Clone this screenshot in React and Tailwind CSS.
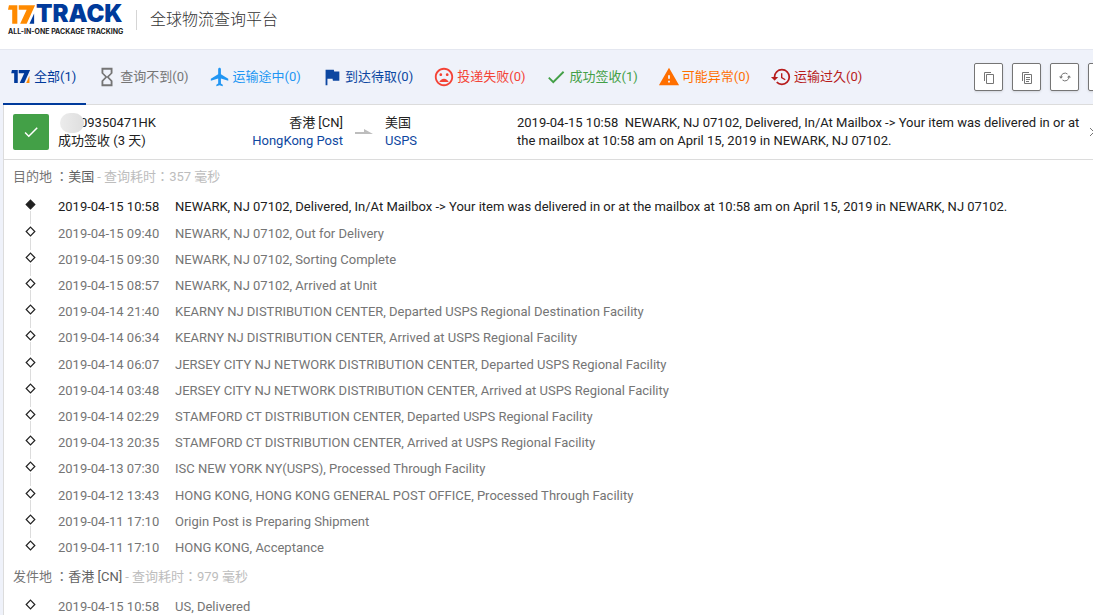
import {
  MdCheck,
  MdFlag,
  MdFlight,
  MdHistory,
  MdHourglassEmpty,
  MdMoodBad,
  MdWarning,
} from "react-icons/md";

const LogoMark = ({ className, color, accent }) => (
  <svg viewBox="0 0 30 20" className={className} aria-hidden="true">
    <path d="M1 0h9v20H4.500V5H0z" fill={color} />
    <path d="M11.500 0H29L20 20h-7l7-15h-8.500z" fill={color} />
    <path d="M28 9v11h-5z" fill={accent} />
  </svg>
);

const CopyIcon = ({ lines }) => (
  <svg viewBox="0 0 12 13" className="h-[13px] w-3" fill="none" stroke="currentColor" aria-hidden="true">
    <path d="M1.500 10V1.500H8" />
    <path d="M3.500 3.500h7v9h-7z" />
    {lines && <path d="M5 6.500h4M5 8.500h4M5 10.500h3" />}
  </svg>
);

const RefreshIcon = () => (
  <svg viewBox="0 0 12 10" className="h-2.5 w-3" fill="none" stroke="currentColor" aria-hidden="true">
    <path d="M2 5.500a4 4 0 0 1 6.500-3.500M10 4.500a4 4 0 0 1-6.500 3.500" />
    <path d="M0 4.500h4L2 6.800zM12 5.500H8L10 3.200z" fill="currentColor" stroke="none" />
  </svg>
);

const tabs = [
  { label: "查询不到(0)", color: "text-[#757575]", Icon: MdHourglassEmpty },
  { label: "运输途中(0)", color: "text-[#2196f3]", Icon: MdFlight },
  { label: "到达待取(0)", color: "text-[#0d47a1]", Icon: MdFlag },
  { label: "投递失败(0)", color: "text-[#f44336]", Icon: MdMoodBad },
  { label: "成功签收(1)", color: "text-[#43a047]", Icon: MdCheck },
  { label: "可能异常(0)", color: "text-[#ff6f00]", Icon: MdWarning },
  { label: "运输过久(0)", color: "text-[#b71c1c]", Icon: MdHistory },
];

const destinationEvents = [
  ["2019-04-15 10:58", "NEWARK, NJ 07102, Delivered, In/At Mailbox -> Your item was delivered in or at the mailbox at 10:58 am on April 15, 2019 in NEWARK, NJ 07102."],
  ["2019-04-15 09:40", "NEWARK, NJ 07102, Out for Delivery"],
  ["2019-04-15 09:30", "NEWARK, NJ 07102, Sorting Complete"],
  ["2019-04-15 08:57", "NEWARK, NJ 07102, Arrived at Unit"],
  ["2019-04-14 21:40", "KEARNY NJ DISTRIBUTION CENTER, Departed USPS Regional Destination Facility"],
  ["2019-04-14 06:34", "KEARNY NJ DISTRIBUTION CENTER, Arrived at USPS Regional Facility"],
  ["2019-04-14 06:07", "JERSEY CITY NJ NETWORK DISTRIBUTION CENTER, Departed USPS Regional Facility"],
  ["2019-04-14 03:48", "JERSEY CITY NJ NETWORK DISTRIBUTION CENTER, Arrived at USPS Regional Facility"],
  ["2019-04-14 02:29", "STAMFORD CT DISTRIBUTION CENTER, Departed USPS Regional Facility"],
  ["2019-04-13 20:35", "STAMFORD CT DISTRIBUTION CENTER, Arrived at USPS Regional Facility"],
  ["2019-04-13 07:30", "ISC NEW YORK NY(USPS), Processed Through Facility"],
  ["2019-04-12 13:43", "HONG KONG, HONG KONG GENERAL POST OFFICE, Processed Through Facility"],
  ["2019-04-11 17:10", "Origin Post is Preparing Shipment"],
  ["2019-04-11 17:10", "HONG KONG, Acceptance"],
];

const originEvents = [["2019-04-15 10:58", "US, Delivered"]];

const Header = () => (
  <header className="flex h-[50px] items-start border-b border-[#e4e7f0] bg-white pl-2">
    <a href="/" aria-label="17TRACK" className="block w-[115px] shrink-0">
      <span className="flex h-7 items-center">
        <LogoMark className="h-[19px] w-7 shrink-0" color="#ff8a00" accent="#003a9b" />
        <span className="font-['Inter'] text-2xl leading-7 font-black text-[#003a9b]">TRACK</span>
      </span>
      <span className="block font-['Inter'] text-[7px] leading-2 font-bold whitespace-nowrap text-[#222]">
        ALL-IN-ONE PACKAGE TRACKING
      </span>
    </a>
    <h1 className="mt-2.5 ml-[13px] border-l border-[#d5d5d5] pl-[13px] text-base leading-5 font-light text-[#333]">
      全球物流查询平台
    </h1>
  </header>
);

const toolButton =
  "flex h-7 w-[29px] shrink-0 items-center justify-center rounded-xs border border-[#757575] bg-white text-[#757575] shadow-sm";

const TabBar = () => (
  <div className="flex h-[55px] items-stretch justify-between border-b border-[#dcdcdc]">
    <nav className="-mb-px flex whitespace-nowrap">
      <button className="flex items-center gap-[3px] border-b-2 border-[#003a9b] pr-2.5 pl-2 text-[#003a9b]">
        <span className="flex w-5 justify-center">
          <LogoMark className="h-[13px] w-5" color="#003a9b" accent="#ff8a00" />
        </span>
        全部(1)
      </button>
      {tabs.map(({ label, color, Icon }) => (
        <button key={label} className={`flex items-center gap-[3px] pr-2.5 pb-0.5 pl-[11px] ${color}`}>
          <span className="flex w-5 justify-center">
            <Icon className="size-[22px] shrink-0" />
          </span>
          {label}
        </button>
      ))}
    </nav>
    <div className="flex w-[119px] shrink-0 items-center gap-[9px] overflow-hidden">
      <button className={toolButton} aria-label="复制单号"><CopyIcon /></button>
      <button className={toolButton} aria-label="复制详情"><CopyIcon lines /></button>
      <button className={toolButton} aria-label="刷新"><RefreshIcon /></button>
      <button className={toolButton} aria-label="更多" />
    </div>
  </div>
);

const Summary = () => (
  <section className="flex h-[55px] items-center overflow-hidden border-b border-[#dcdcdc] pl-[9px] leading-[18px] text-[#212121]">
    <div className="flex size-9 shrink-0 items-center justify-center rounded-xs bg-[#43a047] text-white">
      <MdCheck className="size-[18px]" />
    </div>
    <div className="ml-[9px] w-[170px] shrink-0">
      <p className="flex items-center">
        <span className="z-10 -my-px -mr-1 ml-0.5 h-5 w-6 rounded-full bg-linear-to-r from-[#ececec] to-[#dedede]" />
        09350471HK
      </p>
      <p>成功签收 (3 天)</p>
    </div>
    <div className="w-[115px] shrink-0 text-right">
      <p>香港 [CN]</p>
      <a href="#hongkong-post" className="text-[#0d47a1]">HongKong Post</a>
    </div>
    <svg viewBox="0 0 18 6" className="mx-3 h-1.5 w-[18px] shrink-0" aria-hidden="true">
      <path d="M0 3h9V0l9 5H0z" fill="#bdbdbd" />
    </svg>
    <div className="w-[132px] shrink-0">
      <p>美国</p>
      <a href="#usps" className="text-[#0d47a1]">USPS</a>
    </div>
    <p className="min-w-0 flex-1">
      2019-04-15 10:58&nbsp; NEWARK, NJ 07102, Delivered, In/At Mailbox -&gt; Your item was delivered in or at the
      mailbox at 10:58 am on April 15, 2019 in NEWARK, NJ 07102.
    </p>
    <svg viewBox="0 0 8 10" className="-mr-1 h-2.5 w-2 shrink-0" fill="none" stroke="#757575" aria-hidden="true">
      <path d="M1 1l4 4-4 4" />
    </svg>
  </section>
);

// the TC face centres the full-width colon in its box
const Colon = () => <span className="font-['Noto_Sans_CJK_TC']">：</span>;

const RouteHeading = ({ label, place, time }) => (
  <h2 className="flex h-[33px] items-center pl-[9px] text-[#757575]">
    <span>{label} <Colon /></span>
    <span className="text-[#616161]">{place}</span>
    <span className="pl-[3px] text-[#bdbdbd]">- 查询耗时<Colon />{time} 毫秒</span>
  </h2>
);

const Diamond = ({ filled }) => (
  <svg viewBox="0 0 11 11" className="h-[11px] w-[11px] shrink-0" stroke="#212121" aria-hidden="true">
    <path d="M5.500 1.200L9.800 5.500 5.500 9.800 1.200 5.500z" fill={filled ? "#212121" : "#fff"} strokeWidth="1.200" />
  </svg>
);

const Timeline = ({ events, latest }) => (
  <ol className="pl-[21px]">
    {events.map(([time, text], i) => {
      const active = latest && i === 0;
      return (
        <li
          key={time + text}
          className={`flex leading-7 ${i % 5 === 0 ? "h-[27px]" : "h-[26px]"} ${active ? "text-[#212121]" : "text-[#757575]"}`}
        >
          <div className="flex w-[11px] shrink-0 flex-col items-center pt-1.5">
            <Diamond filled={active} />
            {i < events.length - 1 && <span className="mt-px -mb-1 w-px flex-1 bg-[#dcdcdc]" />}
          </div>
          <time className="ml-[22px] w-[117px] shrink-0">{time}</time>
          <p>{text}</p>
        </li>
      );
    })}
  </ol>
);

const App = () => (
  <div className="h-screen overflow-hidden bg-[#eff2fa] font-['Roboto','Noto_Sans_CJK_SC',sans-serif] text-[13px]">
    <Header />
    <main className="pl-[3px]">
      <TabBar />
      <div className="border-l border-[#dcdcdc] bg-white">
        <Summary />
        <RouteHeading label="目的地" place="美国" time="357" />
        <Timeline events={destinationEvents} latest />
        <RouteHeading label="发件地" place="香港 [CN]" time="979" />
        <Timeline events={originEvents} />
      </div>
    </main>
  </div>
);

export default App;
